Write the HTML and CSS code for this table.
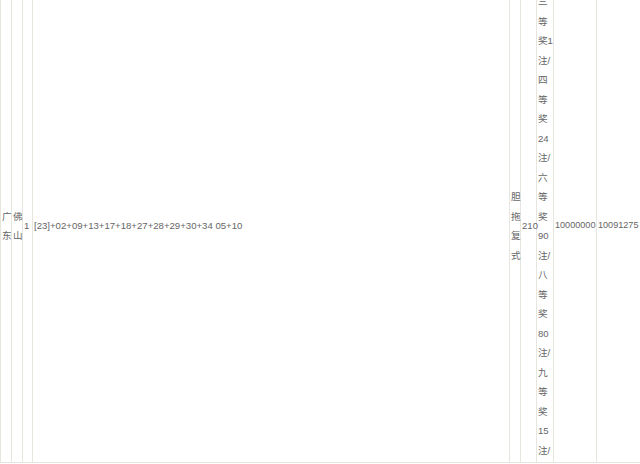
FILE: index.html
```html
<!DOCTYPE html>
<html lang="zh-CN">
<head>
  <meta charset="UTF-8">
  <title>开奖详情</title>
  <link rel="stylesheet" href="styles.css">
</head>
<body>
  <table class="draw-table">
    <colgroup>
      <col class="c-prov">
      <col class="c-city">
      <col class="c-num">
      <col class="c-code">
      <col class="c-type">
      <col class="c-bet">
      <col class="c-prize">
      <col class="c-money">
      <col class="c-pool">
    </colgroup>
    <tr>
      <td>广东</td>
      <td>佛山</td>
      <td>1</td>
      <td>[23]+02+09+13+17+18+27+28+29+30+34 05+10</td>
      <td>胆拖复式</td>
      <td>210</td>
      <td>三等奖1注/四等奖24注/六等奖90注/八等奖80注/九等奖15注/</td>
      <td class="money">10000000</td>
      <td class="money">10091275</td>
    </tr>
  </table>
</body>
</html>
```

FILE: styles.css
```css
body {
  margin: 0;
  background: #fff;
  font-family: "Liberation Sans", Arial, "Noto Sans CJK SC", sans-serif;
  font-size: 9.6px;
  color: #666;
  overflow: hidden;
}

.draw-table {
  width: 640px;
  margin-top: -11px;
  border-collapse: collapse;
  table-layout: fixed;
}

.draw-table td {
  border: 1px solid #e6e6de;
  padding: 2px 0 2px 1px;
  line-height: 19.5px;
  text-align: left;
  vertical-align: middle;
  white-space: normal;
}

.draw-table .money {
  font-size: 9.1px;
}

.c-prov { width: 11px; }
.c-city { width: 11px; }
.c-num { width: 10px; }
.c-code { width: 477px; }
.c-type { width: 11px; }
.c-bet { width: 16px; }
.c-prize { width: 17px; }
.c-money { width: 43px; }
.c-pool { width: 44px; }
```
